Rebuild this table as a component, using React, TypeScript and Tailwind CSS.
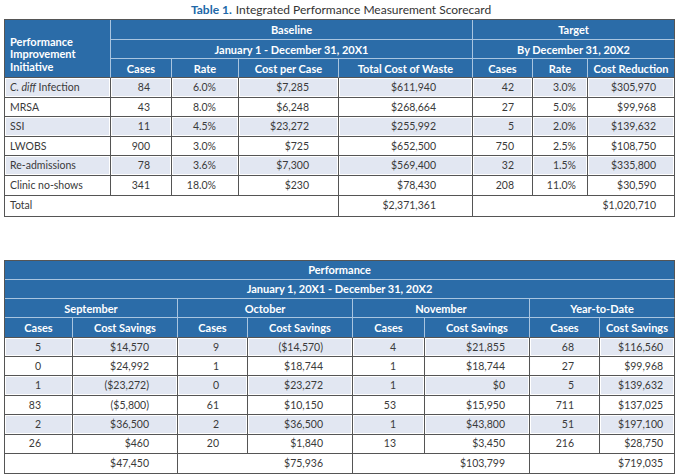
import React from "react";

const HB = "border-[#a9c5e0]";
const DK = "border-[#555555]";

const t1Cols = [106, 61, 67, 100, 134, 60, 55, 87];
const t1Pr = ["", "pr-[21px]", "pr-[22px]", "pr-[29px]", "pr-[36px]", "pr-[18px]", "pr-[11px]", "pr-[18px]"];

const t1Rows: string[][] = [
  ["C. diff Infection", "84", "6.0%", "$7,285", "$611,940", "42", "3.0%", "$305,970"],
  ["MRSA", "43", "8.0%", "$6,248", "$268,664", "27", "5.0%", "$99,968"],
  ["SSI", "11", "4.5%", "$23,272", "$255,992", "5", "2.0%", "$139,632"],
  ["LWOBS", "900", "3.0%", "$725", "$652,500", "750", "2.5%", "$108,750"],
  ["Re-admissions", "78", "3.6%", "$7,300", "$569,400", "32", "1.5%", "$335,800"],
  ["Clinic no-shows", "341", "18.0%", "$230", "$78,430", "208", "11.0%", "$30,590"],
];

const t2Cols = [68, 105, 70, 105, 72, 105, 70, 75];
const t2Pr = ["pr-[31px]", "pr-[28px]", "pr-[28px]", "pr-[29px]", "pr-[28px]", "pr-[24px]", "pr-[25px]", "pr-[11px]"];

const t2Rows: string[][] = [
  ["5", "$14,570", "9", "($14,570)", "4", "$21,855", "68", "$116,560"],
  ["0", "$24,992", "1", "$18,744", "1", "$18,744", "27", "$99,968"],
  ["1", "($23,272)", "0", "$23,272", "1", "$0", "5", "$139,632"],
  ["83", "($5,800)", "61", "$10,150", "53", "$15,950", "711", "$137,025"],
  ["2", "$36,500", "2", "$36,500", "1", "$43,800", "51", "$197,100"],
  ["26", "$460", "20", "$1,840", "13", "$3,450", "216", "$28,750"],
];

const th = "bg-[#2b6ca8] text-white font-bold text-[11px] leading-none text-center p-0 align-middle";
const td = "text-[10.5px] leading-none p-0 align-middle text-[#3a3a3a] font-normal border-r border-b border-[#555555] shadow-[inset_0_0_0_1px_#ffffff]";

function Table1() {
  return (
    <table className={`table-fixed border-separate border-spacing-0 w-[670px] border-l border-t ${DK}`}>
      <colgroup>
        {t1Cols.map((w, i) => (
          <col key={i} style={{ width: w }} />
        ))}
      </colgroup>
      <thead>
        <tr className="h-[20px]">
          <th
            rowSpan={3}
            className="bg-[#2b6ca8] text-white font-bold text-[11px] leading-[12.5px] text-left align-bottom pl-[5px] pr-0 pt-0 pb-[4px] border-r border-b border-r-[#a9c5e0] border-b-[#555555]"
          >
            Performance
            <br />
            Improvement
            <br />
            Initiative
          </th>
          <th colSpan={4} className={`${th} border-r border-b ${HB}`}>Baseline</th>
          <th colSpan={3} className={`${th} border-r border-b ${HB} !border-r-[#555555]`}>Target</th>
        </tr>
        <tr className="h-[19px]">
          <th colSpan={4} className={`${th} border-r border-b ${HB}`}>January 1 - December 31, 20X1</th>
          <th colSpan={3} className={`${th} border-r border-b ${HB} !border-r-[#555555]`}>By December 31, 20X2</th>
        </tr>
        <tr className="h-[19px]">
          {["Cases", "Rate", "Cost per Case", "Total Cost of Waste", "Cases", "Rate", "Cost Reduction"].map((h, i) => (
            <th
              key={i}
              className={`${th} border-r border-b ${HB} !border-b-[#555555] ${i === 6 ? "!border-r-[#555555]" : ""}`}
            >
              {h}
            </th>
          ))}
        </tr>
      </thead>
      <tbody>
        {t1Rows.map((r, ri) => (
          <tr key={ri} className={`h-[19.6px] ${ri % 2 === 0 ? "bg-[#e2e7f2]" : "bg-white"}`}>
            {r.map((c, ci) =>
              ci === 0 ? (
                <td key={ci} className={`${td} text-left pl-[5px]`}>
                  {c === "C. diff Infection" ? (
                    <>
                      <i>C. diff</i> Infection
                    </>
                  ) : (
                    c
                  )}
                </td>
              ) : (
                <td key={ci} className={`${td} text-right ${t1Pr[ci]}`}>
                  {c}
                </td>
              )
            )}
          </tr>
        ))}
        <tr className="h-[21px] bg-white">
          <td colSpan={4} className={`${td} text-left pl-[5px]`}>Total</td>
          <td className={`${td} text-right pr-[36px]`}>$2,371,361</td>
          <td colSpan={3} className={`${td} text-right pr-[18px]`}>$1,020,710</td>
        </tr>
      </tbody>
    </table>
  );
}

function Table2() {
  const months = ["September", "October", "November", "Year-to-Date"];
  const totals = ["$47,450", "$75,936", "$103,799", "$719,035"];
  const totalPr = ["pr-[28px]", "pr-[29px]", "pr-[24px]", "pr-[11px]"];
  return (
    <table className={`table-fixed border-separate border-spacing-0 w-[670px] border-l border-t ${DK}`}>
      <colgroup>
        {t2Cols.map((w, i) => (
          <col key={i} style={{ width: w }} />
        ))}
      </colgroup>
      <thead>
        <tr className="h-[19px]">
          <th colSpan={8} className={`${th} border-r border-b ${HB} !border-r-[#555555]`}>Performance</th>
        </tr>
        <tr className="h-[19.5px]">
          <th colSpan={8} className={`${th} border-r border-b ${HB} !border-r-[#555555]`}>
            January 1, 20X1 - December 31, 20X2
          </th>
        </tr>
        <tr className="h-[19px]">
          {months.map((m, i) => (
            <th key={i} colSpan={2} className={`${th} border-r border-b ${HB} ${i === 3 ? "!border-r-[#555555]" : ""}`}>
              {m}
            </th>
          ))}
        </tr>
        <tr className="h-[19.5px]">
          {[0, 1, 2, 3, 4, 5, 6, 7].map((i) => (
            <th
              key={i}
              className={`${th} border-r border-b ${HB} !border-b-[#555555] ${i === 7 ? "!border-r-[#555555]" : ""}`}
            >
              {i % 2 === 0 ? "Cases" : "Cost Savings"}
            </th>
          ))}
        </tr>
      </thead>
      <tbody>
        {t2Rows.map((r, ri) => (
          <tr key={ri} className={`h-[19.4px] ${ri % 2 === 0 ? "bg-[#e2e7f2]" : "bg-white"}`}>
            {r.map((c, ci) => (
              <td key={ci} className={`${td} text-right ${t2Pr[ci]}`}>
                {c}
              </td>
            ))}
          </tr>
        ))}
        <tr className="h-[20px] bg-white">
          {totals.map((t, i) => (
            <td key={i} colSpan={2} className={`${td} text-right ${totalPr[i]}`}>
              {t}
            </td>
          ))}
        </tr>
      </tbody>
    </table>
  );
}

export default function App() {
  return (
    <div className="w-[680px] h-[475px] bg-white font-['Lato',sans-serif] overflow-hidden">
      <div className="h-[19px] flex items-center justify-center text-[12px] leading-none text-[#333333] pl-[2px]">
        <span className="font-bold text-[#2168a8]">Table 1.</span>
        <span className="ml-[4px]">Integrated Performance Measurement Scorecard</span>
      </div>
      <div className="pl-[4px]">
        <Table1 />
      </div>
      <div className="pl-[4px] mt-[43px]">
        <Table2 />
      </div>
    </div>
  );
}
